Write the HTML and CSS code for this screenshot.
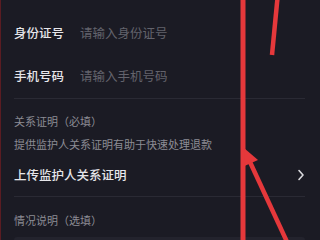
FILE: index.html
```html
<!DOCTYPE html>
<html lang="zh">
<head>
<meta charset="utf-8">
<link rel="stylesheet" href="styles.css">
</head>
<body>
<div class="page">
  <div class="form">
    <div class="row row-1">
      <span class="label">身份证号</span>
      <span class="placeholder">请输入身份证号</span>
    </div>
    <div class="row row-2">
      <span class="label">手机号码</span>
      <span class="placeholder">请输入手机号码</span>
    </div>
    <div class="divider"></div>
    <div class="section-title">关系证明（必填）</div>
    <div class="hint">提供监护人关系证明有助于快速处理退款</div>
    <div class="upload-row">
      <span class="upload-label">上传监护人关系证明</span>
      <svg class="chevron" width="8" height="12" viewBox="0 0 8 12"><polyline points="2,1.5 6,6 2,10.5" fill="none" stroke="#d8d8dc" stroke-width="1.6" stroke-linecap="round" stroke-linejoin="round"/></svg>
    </div>
    <div class="divider"></div>
    <div class="section-title second">情况说明（选填）</div>
    <div class="textarea"></div>
  </div>
  <svg class="annotations" width="320" height="240" viewBox="0 0 320 240">
    <line x1="243" y1="0" x2="243" y2="240" stroke="#e5383b" stroke-width="5"/>
    <line x1="277.5" y1="-2" x2="272" y2="55" stroke="#e5383b" stroke-width="4.5"/>
    <line x1="250" y1="162" x2="288" y2="244" stroke="#e5383b" stroke-width="4.5"/>
    <polygon points="244,148 258,160 244.5,166" fill="#e5383b"/>
  </svg>
</div>
</body>
</html>
```
FILE: styles.css
```css
html, body {
  margin: 0;
  padding: 0;
  background: #1b1b24;
}
body {
  font-family: "Noto Sans CJK SC", "Noto Sans", sans-serif;
}
.page {
  position: relative;
  width: 320px;
  height: 240px;
  overflow: hidden;
  background: #1b1b24;
  border-left: 1px solid #5a1c22;
  box-sizing: border-box;
}
.form {
  padding: 11px 15px 0 13px;
}
.row {
  display: flex;
  align-items: center;
  gap: 16px;
  height: 43px;
}
.row-2 {
  height: 44px;
}
.label {
  font-size: 12.5px;
  font-weight: 500;
  color: #e6e6ea;
  line-height: 16px;
}
.placeholder {
  font-size: 12.5px;
  color: #63636c;
  line-height: 16px;
}
.divider {
  height: 1px;
  background: #2a2a34;
}
.section-title {
  margin-top: 14px;
  font-size: 11px;
  line-height: 16px;
  color: #8c8c94;
}
.section-title.second {
  margin-top: 15px;
}
.hint {
  margin-top: 7px;
  font-size: 11px;
  line-height: 16px;
  color: #8c8c94;
}
.upload-row {
  margin-top: 2px;
  height: 42px;
  display: flex;
  align-items: center;
  justify-content: space-between;
}
.upload-label {
  font-size: 12.5px;
  font-weight: 500;
  color: #e6e6ea;
  line-height: 16px;
}
.chevron {
  margin-right: 0;
}
.textarea {
  margin-top: 9px;
  height: 40px;
  background: #23232d;
  border-radius: 3px;
}
.annotations {
  position: absolute;
  left: -1px;
  top: 0;
}
```
